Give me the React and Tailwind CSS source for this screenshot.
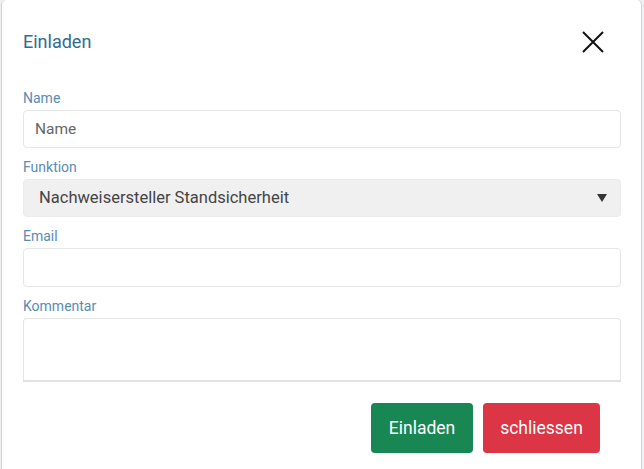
import React from 'react';

const Label = ({ children }) => (
  <label className="block text-[14px] leading-[16px] text-[#5a8cb3] mb-[4px]">{children}</label>
);

export default function App() {
  return (
    <div className="w-[644px] h-[469px] bg-[#eef0f2] flex" style={{ fontFamily: 'Roboto, "Liberation Sans", sans-serif' }}>
      <div className="ml-[1px] w-[641px] h-full bg-white border-x border-[#cfd2d5] rounded-t-[5px] flex flex-col">
        {/* Header */}
        <div className="flex items-center justify-between pl-[21px] pr-[36px] pt-[30px] mb-[36px]">
          <h2 className="text-[18px] leading-[24px] text-[#2f6b96]">Einladen</h2>
          <button className="w-[24px] h-[24px] flex items-center justify-center">
            <svg width="22" height="22" viewBox="0 0 22 22" fill="none" stroke="#111" strokeWidth="2">
              <path d="M1 1L21 21M21 1L1 21" />
            </svg>
          </button>
        </div>

        {/* Form */}
        <div className="px-[21px] pr-[20px] flex flex-col">
          <Label>Name</Label>
          <input
            className="h-[38px] w-full rounded-[4px] border border-[#e6e6e6] px-[11px] text-[15.5px] text-[#555] placeholder:text-[#666] outline-none"
            placeholder="Name"
          />

          <div className="mt-[11px]">
            <Label>Funktion</Label>
          </div>
          <div className="h-[38px] w-full rounded-[4px] bg-[#f0f0f0] border border-[#ebebeb] flex items-center justify-between pl-[15px] pr-[13px]">
            <span className="text-[16.5px] text-[#444]">Nachweisersteller Standsicherheit</span>
            <svg width="10" height="8" viewBox="0 0 10 8"><path d="M0 0H10L5 8Z" fill="#333" /></svg>
          </div>

          <div className="mt-[11px]">
            <Label>Email</Label>
          </div>
          <input className="h-[39px] w-full rounded-[4px] border border-[#e6e6e6] px-[11px] text-[15px] outline-none" />

          <div className="mt-[11px]">
            <Label>Kommentar</Label>
          </div>
          <div className="h-[62px] w-full rounded-t-[4px] border border-b-0 border-[#e6e6e6]" />
          <div className="h-[2px] w-full bg-[#dfe3e7]" />
        </div>

        {/* Footer */}
        <div className="flex justify-end gap-[10px] pr-[41px] pt-[21px]">
          <button className="h-[50px] w-[102px] rounded-[4px] bg-[#198754] text-white text-[17.5px]">Einladen</button>
          <button className="h-[50px] w-[117px] rounded-[4px] bg-[#dc3545] text-white text-[17.5px]">schliessen</button>
        </div>
      </div>
    </div>
  );
}
